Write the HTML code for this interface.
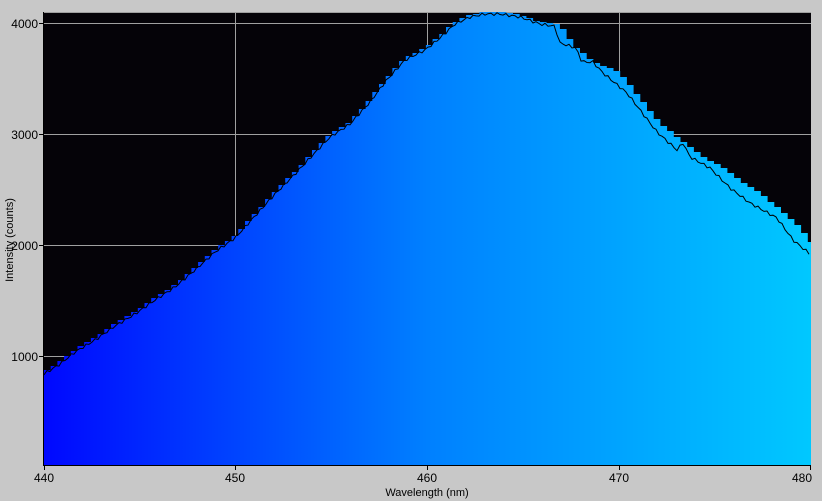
<!DOCTYPE html>
<html><head><style>
html,body{margin:0;padding:0;background:#c8c8c8;}
body{width:822px;height:501px;position:relative;overflow:hidden;font-family:"Liberation Sans",sans-serif;}
</style></head><body>
<svg id="s" width="822" height="501" xmlns="http://www.w3.org/2000/svg" style="position:absolute;left:0;top:0">
<defs><linearGradient id="g" x1="0" x2="1" y1="0" y2="0"><stop offset="0" stop-color="#0008ff"/><stop offset="0.5" stop-color="#0080ff"/><stop offset="1" stop-color="#00c8ff"/></linearGradient></defs>
<rect x="44" y="12" width="767" height="453" fill="#050308"/>
<line x1="44" y1="12.5" x2="811" y2="12.5" stroke="#a0a0a0"/>
<g stroke="#a0a0a0" stroke-width="1">
<line x1="235.5" y1="12" x2="235.5" y2="465"/><line x1="427.5" y1="12" x2="427.5" y2="465"/><line x1="619.5" y1="12" x2="619.5" y2="465"/>
<line x1="44" y1="23.5" x2="811" y2="23.5"/><line x1="44" y1="134.5" x2="811" y2="134.5"/><line x1="44" y1="245.5" x2="811" y2="245.5"/><line x1="44" y1="356.5" x2="811" y2="356.5"/>
</g>
<path id="bars" fill="url(#g)"/>
<polyline id="ln" fill="none" stroke="#000" stroke-width="1"/>
<g stroke="#000"><line x1="43.5" y1="12" x2="43.5" y2="466"/><line x1="43" y1="465.5" x2="811" y2="465.5"/>
<line x1="39" y1="23.5" x2="44" y2="23.5"/><line x1="39" y1="134.5" x2="44" y2="134.5"/><line x1="39" y1="245.5" x2="44" y2="245.5"/><line x1="39" y1="356.5" x2="44" y2="356.5"/>
<line x1="44.5" y1="465" x2="44.5" y2="470"/><line x1="235.5" y1="465" x2="235.5" y2="470"/><line x1="427.5" y1="465" x2="427.5" y2="470"/><line x1="619.5" y1="465" x2="619.5" y2="470"/><line x1="810.5" y1="465" x2="810.5" y2="470"/>
</g>
<g font-size="12" fill="#000" text-anchor="end"><text x="38" y="28">4000</text><text x="38" y="139">3000</text><text x="38" y="250">2000</text><text x="38" y="361">1000</text></g>
<g font-size="12" fill="#000" text-anchor="middle"><text x="44" y="482">440</text><text x="235" y="482">450</text><text x="427" y="482">460</text><text x="619" y="482">470</text><text x="802" y="482">480</text></g>
<text x="427" y="496" font-size="11" text-anchor="middle">Wavelength (nm)</text>
<text transform="translate(13,240) rotate(-90)" font-size="11" text-anchor="middle">Intensity (counts)</text>
</svg>
<script>
var P=[[44,372],[60,362],[75,350],[95,338],[115,324],[135,312],[155,298],[175,285],[195,268],[215,250],[235,236],[255,214],[275,192],[295,172],[310,156],[330,135],[350,122],[370,100],[385,80],[405,58],[425,48],[440,36],[455,22],[470,15],[485,12],[500,12],[520,15],[540,22],[560,25],[576,47],[593,62],[620,72],[660,123],[703,157],[720,165],[740,180],[760,193],[787,215],[800,227],[811,242]];
var L=[[555,27],[560,43],[576,48],[582,62],[593,62],[603,73],[627,93],[650,123],[657,132],[677,150],[683,143],[690,157],[710,168],[730,188],[750,203],[777,218],[793,240],[811,255]];
function f(A,x){if(x<=A[0][0])return A[0][1];for(var i=1;i<A.length;i++){if(x<=A[i][0]){var a=A[i-1],b=A[i];return a[1]+(b[1]-a[1])*(x-a[0])/(b[0]-a[0]);}}return A[A.length-1][1];}
var d="M44 465",w=6.7;
for(var x=44;x<811;x+=w){var y=Math.round(f(P,x+w/2));var x2=Math.min(811,x+w);d+=" L"+x.toFixed(1)+" "+y+" L"+x2.toFixed(1)+" "+y;}
d+=" L811 465Z";document.getElementById("bars").setAttribute("d",d);
var pts=[];for(var x=44;x<=811;x+=3){var y=x<555?f(P,x)+2:f(L,x);pts.push(x+","+(y+Math.sin(x*1.3)*1.5).toFixed(1));}
document.getElementById("ln").setAttribute("points",pts.join(" "));
</script>
</body></html>
